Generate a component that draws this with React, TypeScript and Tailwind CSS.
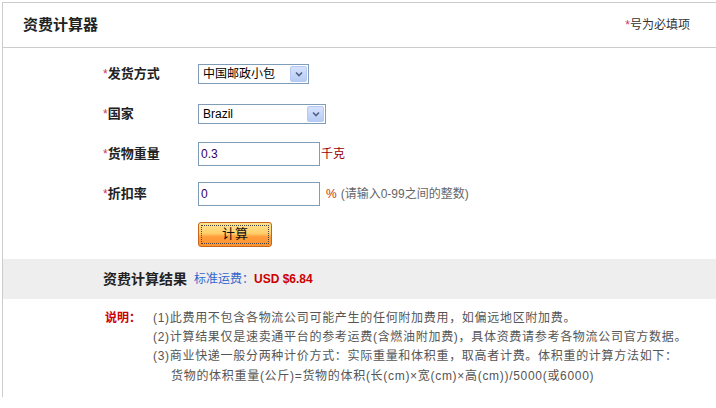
import React from "react";

function XpSelect({ value, width }: { value: string; width: string }) {
  return (
    <div className={`${width} h-[20px] border border-[#7f9db9] bg-white flex items-center justify-between pl-[4px] pr-[1px]`}>
      <span className="text-[12px] text-[#000] leading-none">{value}</span>
      <span className="w-[17px] h-[16px] rounded-[2px] border border-[#b6c9f2] bg-gradient-to-b from-[#d6e2fc] to-[#b8cbf5] flex items-center justify-center">
        <svg width="8" height="6" viewBox="0 0 8 6">
          <path d="M1 1.5 L4 4.5 L7 1.5" fill="none" stroke="#4d6185" strokeWidth="1.6" />
        </svg>
      </span>
    </div>
  );
}

function Label({ text }: { text: string }) {
  return (
    <div className="w-[95px] text-[13px] font-bold text-[#222]">
      <span className="text-[#cc3366] font-normal text-[12px]">*</span>
      {text}
    </div>
  );
}

export default function App() {
  return (
    <div className="w-[716px] h-[408px] bg-white overflow-hidden font-['Liberation_Sans','Noto_Sans_CJK_SC',sans-serif] text-[12px] text-[#333]">
      <div className="mt-[2px] ml-[2px] w-[714px] h-[395px] border-t border-l border-[#ccc]">
        <header className="h-[45px] border-b border-[#ccc] flex items-center justify-between pl-[20px] pr-[26px]">
          <h1 className="text-[15px] font-bold text-[#222]">资费计算器</h1>
          <span className="text-[12px] text-[#333]">
            <span className="text-[#cc3366]">*</span>号为必填项
          </span>
        </header>

        <div className="pt-[6px] pl-[100px]">
          <div className="h-[40px] flex items-center">
            <Label text="发货方式" />
            <XpSelect value="中国邮政小包" width="w-[111px]" />
          </div>
          <div className="h-[40px] flex items-center">
            <Label text="国家" />
            <XpSelect value="Brazil" width="w-[128px]" />
          </div>
          <div className="h-[40px] flex items-center">
            <Label text="货物重量" />
            <div className="w-[122px] h-[24px] border border-[#7f9db9] bg-white flex items-center pl-[2px] text-[12px] text-[#330066]">0.3</div>
            <span className="ml-[1px] text-[12px] text-[#990000]">千克</span>
          </div>
          <div className="h-[40px] flex items-center">
            <Label text="折扣率" />
            <div className="w-[122px] h-[24px] border border-[#7f9db9] bg-white flex items-center pl-[2px] text-[12px] text-[#330066]">0</div>
            <span className="ml-[6px] text-[12px] text-[#cc3300]">%</span>
            <span className="ml-[4px] text-[12px] text-[#666]">(请输入0-99之间的整数)</span>
          </div>
          <div className="h-[40px] flex items-center pl-[95px]">
            <button className="relative w-[74px] h-[25px] rounded-[3px] border border-[#c7661a] bg-[linear-gradient(to_bottom,#ffe38f_0%,#ffcf6a_45%,#ff9c3a_60%,#ff9330_100%)] text-[13px] text-[#111] flex items-center justify-center">
              <span className="absolute inset-[2px] border border-dotted border-[#444]"></span>
              计算
            </button>
          </div>
        </div>

        <div className="mt-[5px] h-[40px] bg-[#eeeeee] flex items-center pl-[100px]">
          <span className="text-[14px] font-bold text-[#222]">资费计算结果</span>
          <span className="ml-[7px] text-[12px] text-[#3366cc]">标准运费：</span>
          <span className="text-[12px] font-bold text-[#cc0000]">USD $6.84</span>
        </div>

        <div className="pt-[10px] pl-[102px] flex text-[12px] leading-[19px]">
          <span className="w-[48px] font-bold text-[#cc0000]">说明：</span>
          <div className="text-[#555] tracking-[0.7px]">
            <p>(1)此费用不包含各物流公司可能产生的任何附加费用，如偏远地区附加费。</p>
            <p>(2)计算结果仅是速卖通平台的参考运费(含燃油附加费)，具体资费请参考各物流公司官方数据。</p>
            <p>(3)商业快递一般分两种计价方式：实际重量和体积重，取高者计费。体积重的计算方法如下：</p>
            <p className="pl-[18px] mt-[1px]">货物的体积重量(公斤)=货物的体积(长(cm)×宽(cm)×高(cm))/5000(或6000)</p>
          </div>
        </div>
      </div>
    </div>
  );
}
